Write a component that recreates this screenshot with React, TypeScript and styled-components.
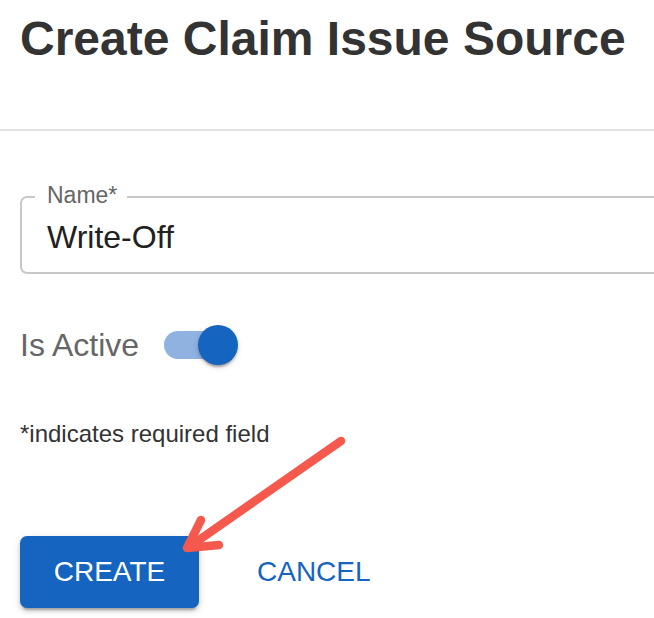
import React from 'react'
import styled, { createGlobalStyle } from 'styled-components'

const GlobalStyle = createGlobalStyle`
  html, body {
    margin: 0;
    padding: 0;
    background: #ffffff;
    overflow: hidden;
  }
  body {
    font-family: "Liberation Sans", Arial, sans-serif;
  }
`

const Page = styled.div`
  position: relative;
  width: 654px;
  height: 618px;
  overflow: hidden;
`

const Header = styled.header`
  padding: 11px 20px 0;
`

const Title = styled.h1`
  margin: 0;
  font-size: 48px;
  line-height: 55px;
  font-weight: 700;
  color: #333333;
  white-space: nowrap;
`

const Divider = styled.hr`
  margin: 63px 0 0;
  border: none;
  height: 2px;
  background: #e3e3e3;
`

const Form = styled.form`
  display: flex;
  flex-direction: column;
  padding: 0 20px;
`

const Field = styled.div`
  position: relative;
  margin-top: 65px;
  width: 700px;
  height: 78px;
  box-sizing: border-box;
  border: 2px solid #c8c8c8;
  border-radius: 7px;
  padding: 21px 25px 16px;
`

const FieldLabel = styled.span`
  position: absolute;
  top: -14px;
  left: 13px;
  padding: 0 10px 0 12px;
  background: #ffffff;
  font-size: 23px;
  line-height: 23px;
  color: #666666;
`

const FieldValue = styled.div`
  font-size: 32px;
  line-height: 37px;
  color: #212121;
`

const ToggleRow = styled.label`
  display: flex;
  align-items: center;
  gap: 25px;
  height: 40px;
  margin-top: 51px;
`

const ToggleText = styled.span`
  font-size: 32px;
  line-height: 37px;
  color: #666666;
`

const Switch = styled.span`
  position: relative;
  display: block;
  width: 74px;
  height: 40px;
`

const Track = styled.span<{ $on: boolean }>`
  display: block;
  margin-top: 6px;
  width: 68px;
  height: 28px;
  border-radius: 14px;
  background: ${(p) => (p.$on ? '#8fb2e0' : '#bdbdbd')};
`

const Thumb = styled.span<{ $on: boolean }>`
  position: absolute;
  top: 0;
  left: ${(p) => (p.$on ? '34px' : '0')};
  width: 40px;
  height: 40px;
  border-radius: 50%;
  background: ${(p) => (p.$on ? '#1565c0' : '#fafafa')};
  box-shadow: 0 4px 2px -2px rgba(0, 0, 0, 0.2), 0 2px 3px 0 rgba(0, 0, 0, 0.14),
    0 2px 6px 0 rgba(0, 0, 0, 0.12);
`

const Hint = styled.p`
  margin: 55px 0 0;
  font-size: 24px;
  line-height: 28px;
  color: #333333;
`

const Actions = styled.div`
  display: flex;
  align-items: center;
  gap: 42px;
  margin-top: 88px;
`

const Button = styled.button<{ $variant: 'contained' | 'text' }>`
  height: 72px;
  box-sizing: border-box;
  border: none;
  border-radius: 7px;
  font-family: "Liberation Sans", Arial, sans-serif;
  font-size: 28px;
  font-weight: 400;
  text-transform: uppercase;
  cursor: pointer;
  ${(p) =>
    p.$variant === 'contained'
      ? `
    width: 179px;
    padding: 0;
    background: #1565c0;
    color: #ffffff;
    box-shadow: 0 5px 2px -3px rgba(0, 0, 0, 0.2), 0 3px 4px 0 rgba(0, 0, 0, 0.14),
      0 2px 8px 0 rgba(0, 0, 0, 0.12);
  `
      : `
    padding: 0 16px;
    background: transparent;
    color: #1565c0;
  `}
`

const Annotation = styled.svg`
  position: absolute;
  top: 0;
  left: 0;
  pointer-events: none;
`

function Arrow() {
  return (
    <Annotation width="654" height="618" viewBox="0 0 654 618">
      <g
        fill="none"
        stroke="#f5594e"
        strokeWidth="8.5"
        strokeLinecap="round"
        strokeLinejoin="round"
      >
        <line x1="341" y1="441" x2="189" y2="547" />
        <polyline points="201,520 187,548 219,545" />
      </g>
    </Annotation>
  )
}

export default function App() {
  const active = true

  return (
    <Page>
      <GlobalStyle />
      <Header>
        <Title>Create Claim Issue Source</Title>
      </Header>
      <Divider />
      <Form onSubmit={(e) => e.preventDefault()}>
        <Field>
          <FieldLabel>Name*</FieldLabel>
          <FieldValue>Write-Off</FieldValue>
        </Field>
        <ToggleRow>
          <ToggleText>Is Active</ToggleText>
          <Switch>
            <Track $on={active} />
            <Thumb $on={active} />
          </Switch>
        </ToggleRow>
        <Hint>*indicates required field</Hint>
        <Actions>
          <Button type="submit" $variant="contained">
            Create
          </Button>
          <Button type="button" $variant="text">
            Cancel
          </Button>
        </Actions>
      </Form>
      <Arrow />
    </Page>
  )
}
